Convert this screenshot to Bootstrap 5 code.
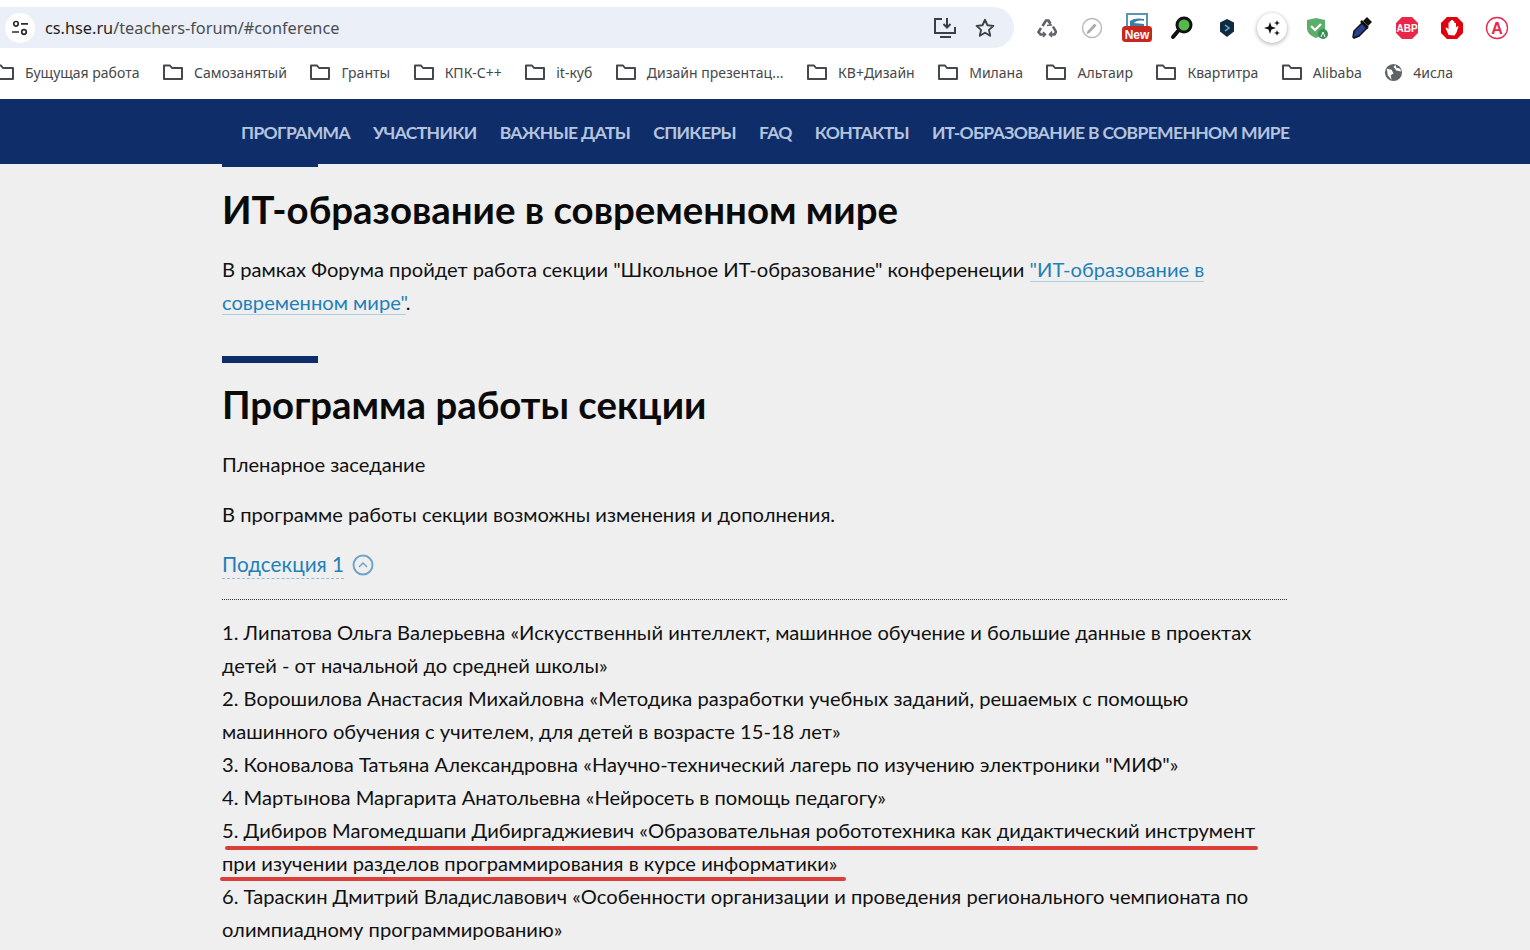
<!DOCTYPE html>
<html lang="ru">
<head>
    <meta charset="utf-8" />
    <title>ИТ-образование в современном мире</title>
    <link href="https://cdn.jsdelivr.net/npm/bootstrap@5.3.0/dist/css/bootstrap.min.css" rel="stylesheet">
    <style>
        html, body { height: 950px; overflow: hidden; }
        body { background: #efefef; font-family: "Lato", "Liberation Sans", sans-serif; color: #111; }
        .chrome-top { height: 55px; background: #fff; padding-top: 7px; }
        .omnibox { width: 1014px; height: 41px; background: #ebeff7; border-radius: 0 21px 21px 0; padding-right: 10px; }
        .site-btn { width: 30px; height: 30px; border-radius: 50%; background: #fff; margin-left: 5px; margin-right: 10px; }
        .url-text { font: 16.3px "Noto Sans", sans-serif; color: #4a4d52; }
        .url-text b { font-weight: 400; color: #1f1f1f; }
        .ext-row { margin-left: 10px; height: 41px; }
        .ext-slot { width: 45px; height: 32px; }
        .ext-round { width: 30px; height: 30px; border-radius: 50%; background: #fff; box-shadow: 0 1px 4px rgba(0,0,0,.35); }
        .chrome-marks { height: 44px; background: #fff; font: 14px "Noto Sans", sans-serif; color: #45484c; padding-bottom: 10px; margin-left: -7px; gap: 22.5px; white-space: nowrap; overflow: hidden; }
        .mark-item { gap: 10px; flex: none; }
        .mark-item svg { flex: none; }
        .site-nav { height: 65px; background: #0f2d69; padding: 2px 0 0 241px; gap: 23px; }
        .site-nav a { color: #b5c4de; font: 700 17.5px "Lato", sans-serif; text-decoration: none; letter-spacing: -.65px; }
        .page-main { width: 1065px; margin-left: 222px; }
        .accent-line { width: 96px; height: 7px; background: #0f2d69; }
        .first-line { height: 3px; }
        .first-line + .sect-title { margin-top: 19px; }
        .second-line { margin-top: 37px; }
        .sect-title { font: 700 38.4px/1.2 "Lato", sans-serif; color: #0a0a0a; margin: 18px 0 0; }
        .body-copy { font: 400 20.15px/33px "Lato", sans-serif; margin: 21px 0 0; color: #111; }
        .next-copy { margin-top: 17px; }
        .blue-link { color: #1f80b9; text-decoration: none; border-bottom: 1px solid #a9cde2; }
        .sub-row { margin-top: 20px; }
        .sub-link { color: #1f80b9; border-bottom: 1px dashed #9fb9c9; font-size: 20.7px; line-height: 27px; display: inline-block; }
        .dot-rule { border-top: 1px dotted #333; margin-top: 20px; }
        .list-copy { margin-top: 16px; }
        .red-mark { position: absolute; height: 4px; background: #db3f39; border-radius: 2px; }
        .red-one { left: 3px; top: 230px; width: 1033px; }
        .red-two { left: -2px; top: 261px; width: 626px; }
    </style>
</head>
<body>
    <svg class="d-none">
        <symbol id="folder" viewBox="0 0 22 18"><path d="M2 2.500h6l2 2.500h10v11H2z" fill="none" stroke="#45484c" stroke-width="2" stroke-linejoin="round"/></symbol>
    </svg>
    <div class="chrome-top d-flex">
        <div class="omnibox d-flex align-items-center">
            <div class="site-btn d-flex align-items-center justify-content-center">
                <svg width="18" height="18" viewBox="0 0 18 18" fill="none" stroke="#2b2d30" stroke-width="1.700"><circle cx="5" cy="4.800" r="2.300"/><path d="M10 4.800h7M1 13h7"/><circle cx="13" cy="13" r="2.300"/></svg>
            </div>
            <span class="url-text"><b>cs.hse.ru</b>/teachers-forum/#conference</span>
            <div class="ms-auto d-flex align-items-center gap-3">
                <svg width="26" height="24" viewBox="0 0 26 24" fill="none" stroke="#3c3f43" stroke-width="2"><path d="M10 3H3v14h20v-6M8 21h11M15 2v9M11.500 8l3.500 3.500L18.500 8"/></svg>
                <svg class="me-2" width="22" height="22" viewBox="0 0 24 24" fill="none" stroke="#3c3f43" stroke-width="2" stroke-linejoin="round"><path d="M12 3l2.700 6 6.500.7-4.900 4.300 1.400 6.500L12 17.200 6.300 20.500l1.400-6.500-4.900-4.300 6.500-.7z"/></svg>
            </div>
        </div>
        <div class="ext-row d-flex align-items-center">
            <div class="ext-slot d-flex align-items-center justify-content-center"><svg width="20" height="20" viewBox="0 0 20 20" fill="none" stroke="#5f6368" stroke-width="2.600"><path d="M5.500 8L9 2.500h2.500l2 3M16 8.500l3 5.500-1.500 2.500H13M8 16.500H3.500L1.500 14l2.500-4"/><path d="M11 3.500l3 3.500-4 .5M15 13.500l-2.500 3 2.500 2.500M6 14l2.500 2.500L6 19" stroke-width="1.600"/></svg></div>
            <div class="ext-slot d-flex align-items-center justify-content-center"><svg width="22" height="22" viewBox="0 0 22 22"><circle cx="11" cy="11" r="9.500" fill="#fff" stroke="#bbb" stroke-width="1.500"/><path d="M6.500 14l7-7.500 2 2-7 7.500-3 1z" fill="#aaa"/></svg></div>
            <div class="ext-slot d-flex align-items-center justify-content-center"><svg width="32" height="30" viewBox="0 0 32 30"><rect x="6" y="1" width="20" height="16" fill="#fff" stroke="#5c93b5" stroke-width="2"/><path d="M9 8c4-3 9-3 14-2v2c-5-1-8 0-10 2l10 1v3H9z" fill="#3d7ea6"/><rect x="1" y="13" width="30" height="16" rx="3.500" fill="#c8261f"/><text x="16" y="25.500" text-anchor="middle" font-family="Liberation Sans" font-size="12" font-weight="700" fill="#fff">New</text></svg></div>
            <div class="ext-slot d-flex align-items-center justify-content-center"><svg width="24" height="24" viewBox="0 0 24 24"><circle cx="14" cy="9" r="7" fill="#55b84a" stroke="#111" stroke-width="3"/><path d="M8.500 14.500L3 21" stroke="#111" stroke-width="4" stroke-linecap="round"/></svg></div>
            <div class="ext-slot d-flex align-items-center justify-content-center"><svg width="18" height="20" viewBox="0 0 18 20"><path d="M9 1l7 3.500v9L9 19l-7-5.500v-9z" fill="#13293f"/><path d="M7 7l4 3-4 3" stroke="#5fb3d9" stroke-width="1.500" fill="none"/></svg></div>
            <div class="ext-slot d-flex align-items-center justify-content-center"><div class="ext-round d-flex align-items-center justify-content-center"><svg width="18" height="18" viewBox="0 0 18 18" fill="#111"><path d="M7 3l1.500 4.500L13 9l-4.500 1.500L7 15l-1.500-4.500L1 9l4.500-1.500zM14 1l.8 2.200L17 4l-2.200.8L14 7l-.8-2.200L11 4l2.200-.8zM14 11l.8 2.200 2.200.8-2.200.8-.8 2.200-.8-2.200-2.200-.8 2.200-.8z"/></svg></div></div>
            <div class="ext-slot d-flex align-items-center justify-content-center"><svg width="22" height="22" viewBox="0 0 22 22"><path d="M1 3l9-2 9 2v8c0 5-4 8-9 10C5 19 1 16 1 11z" fill="#5cae6b"/><path d="M5 9l4 4 6-6" stroke="#fff" stroke-width="2.200" fill="none"/><circle cx="17" cy="17" r="5" fill="#3a8f55"/><path d="M15 20l2-5 2 5" stroke="#fff" fill="none"/></svg></div>
            <div class="ext-slot d-flex align-items-center justify-content-center"><svg width="22" height="24" viewBox="0 0 22 24"><path d="M3 22l-1-1 1-6 8-8 5 5-8 8z" fill="#27408f" stroke="#111" stroke-width="1.500"/><path d="M12 5l4-4 5 5-4 4z" fill="#111"/><path d="M10 5l7 7" stroke="#111" stroke-width="2.500"/></svg></div>
            <div class="ext-slot d-flex align-items-center justify-content-center"><svg width="24" height="24" viewBox="0 0 24 24"><path d="M7 1h10l6 6v10l-6 6H7l-6-6V7z" fill="#e8274b"/><text x="12" y="16" text-anchor="middle" font-family="Liberation Sans" font-size="10" font-weight="700" fill="#fff">ABP</text></svg></div>
            <div class="ext-slot d-flex align-items-center justify-content-center"><svg width="24" height="24" viewBox="0 0 24 24"><path d="M7 1h10l6 6v10l-6 6H7l-6-6V7z" fill="#e0000f"/><path d="M8.500 19L5.500 12l1.500-.5 1.500 2V6.500h1.300V5H11V4h2v1h1.300v2H16v4.500l1.500-1.500 1 .5-2 6-2 3z" fill="#fff"/></svg></div>
            <div class="ext-slot d-flex align-items-center justify-content-center"><svg width="24" height="24" viewBox="0 0 24 24"><circle cx="12" cy="12" r="10.500" fill="#fff" stroke="#e8274b" stroke-width="1.300"/><text x="12" y="18" text-anchor="middle" font-family="Liberation Sans" font-size="16" font-weight="700" fill="#e8274b">A</text></svg></div>
        </div>
    </div>
    <div class="chrome-marks d-flex align-items-center">
        <div class="mark-item d-flex align-items-center"><svg width="22" height="18"><use href="#folder"/></svg><span>Бущущая работа</span></div>
        <div class="mark-item d-flex align-items-center"><svg width="22" height="18"><use href="#folder"/></svg><span>Самозанятый</span></div>
        <div class="mark-item d-flex align-items-center"><svg width="22" height="18"><use href="#folder"/></svg><span>Гранты</span></div>
        <div class="mark-item d-flex align-items-center"><svg width="22" height="18"><use href="#folder"/></svg><span>КПК-С++</span></div>
        <div class="mark-item d-flex align-items-center"><svg width="22" height="18"><use href="#folder"/></svg><span>it-куб</span></div>
        <div class="mark-item d-flex align-items-center"><svg width="22" height="18"><use href="#folder"/></svg><span>Дизайн презентац...</span></div>
        <div class="mark-item d-flex align-items-center"><svg width="22" height="18"><use href="#folder"/></svg><span>КВ+Дизайн</span></div>
        <div class="mark-item d-flex align-items-center"><svg width="22" height="18"><use href="#folder"/></svg><span>Милана</span></div>
        <div class="mark-item d-flex align-items-center"><svg width="22" height="18"><use href="#folder"/></svg><span>Альтаир</span></div>
        <div class="mark-item d-flex align-items-center"><svg width="22" height="18"><use href="#folder"/></svg><span>Квартитра</span></div>
        <div class="mark-item d-flex align-items-center"><svg width="22" height="18"><use href="#folder"/></svg><span>Alibaba</span></div>
        <div class="mark-item d-flex align-items-center"><svg width="19" height="19" viewBox="0 0 20 20"><circle cx="10" cy="10" r="9" fill="#5f6368"/><path d="M3 6l5 1 2 4-3 2 1 5-4-5zM12 2l1 3 4 1 1 3-5-1-3-4z" fill="#fff"/></svg><span>4исла</span></div>
    </div>
    <nav class="site-nav d-flex align-items-center">
        <a href="#">ПРОГРАММА</a><a href="#">УЧАСТНИКИ</a><a href="#">ВАЖНЫЕ ДАТЫ</a><a href="#">СПИКЕРЫ</a><a href="#">FAQ</a><a href="#">КОНТАКТЫ</a><a href="#">ИТ-ОБРАЗОВАНИЕ В СОВРЕМЕННОМ МИРЕ</a>
    </nav>
    <main class="page-main">
        <div class="accent-line first-line"></div>
        <h2 class="sect-title">ИТ-образование в современном мире</h2>
        <p class="body-copy">В рамках Форума пройдет работа секции "Школьное ИТ-образование" конференеции <a class="blue-link" href="#">"ИТ-образование в</a> <a class="blue-link" href="#">современном мире"</a>.</p>
        <div class="accent-line second-line"></div>
        <h2 class="sect-title">Программа работы секции</h2>
        <p class="body-copy">Пленарное заседание</p>
        <p class="body-copy next-copy">В программе работы секции возможны изменения и дополнения.</p>
        <div class="sub-row d-flex align-items-center gap-2">
            <span class="sub-link">Подсекция 1</span>
            <svg width="22" height="22" viewBox="0 0 22 22" fill="none" stroke="#6ea5c9" stroke-width="2"><circle cx="11" cy="11" r="9.500"/><path d="M7 13l4-4 4 4" stroke-width="1.500"/></svg>
        </div>
        <div class="dot-rule"></div>
        <div class="position-relative">
            <p class="body-copy list-copy">1. Липатова Ольга Валерьевна «Искусственный интеллект, машинное обучение и большие данные в проектах детей - от начальной до средней школы»<br>
            2. Ворошилова Анастасия Михайловна «Методика разработки учебных заданий, решаемых с помощью машинного обучения с учителем, для детей в возрасте 15-18 лет»<br>
            3. Коновалова Татьяна Александровна «Научно-технический лагерь по изучению электроники "МИФ"»<br>
            4. Мартынова Маргарита Анатольевна «Нейросеть в помощь педагогу»<br>
            5. Дибиров Магомедшапи Дибиргаджиевич «Образовательная робототехника как дидактический инструмент при изучении разделов программирования в курсе информатики»<br>
            6. Тараскин Дмитрий Владиславович «Особенности организации и проведения регионального чемпионата по олимпиадному программированию»</p>
            <div class="red-mark red-one"></div>
            <div class="red-mark red-two"></div>
        </div>
    </main>
    <script src="https://cdn.jsdelivr.net/npm/bootstrap@5.3.0/dist/js/bootstrap.bundle.min.js"></script>
</body>
</html>
